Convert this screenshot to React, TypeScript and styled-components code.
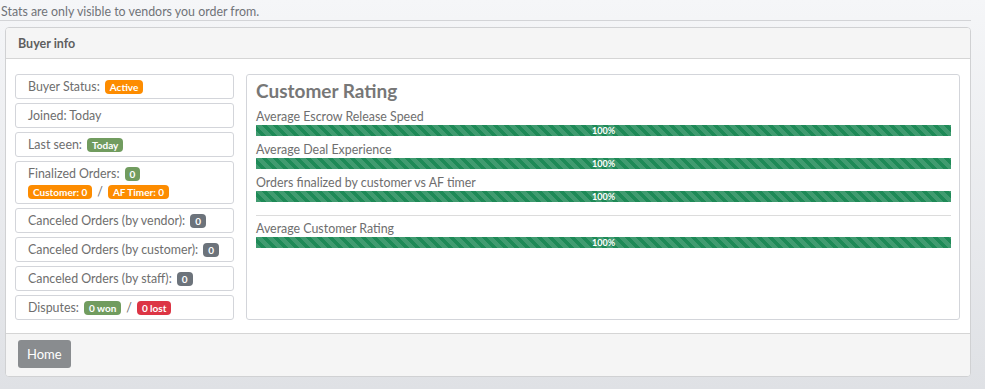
import React from "react";
import styled, { createGlobalStyle } from "styled-components";

const GlobalStyle = createGlobalStyle`
  html, body {
    margin: 0;
    padding: 0;
  }
  body {
    min-height: 389px;
    background: linear-gradient(#f5f6f8, #dfe1e5);
    font-family: "Lato", "Open Sans", sans-serif;
    color: #6e6e6e;
    font-size: 12.4px;
  }
`;

const Page = styled.div`
  width: 971px;
  padding-top: 4px;
`;

const Note = styled.div`
  padding-left: 1px;
  height: 15px;
  line-height: 15px;
  color: #707378;
`;

const Rule = styled.div`
  height: 1px;
  background: #d3d4d7;
  margin-top: 1px;
`;

const Panel = styled.div`
  margin: 6px 0 0 5px;
  border: 1px solid #d0d1d3;
  border-radius: 4px;
  background: #fff;
  overflow: hidden;
`;

const PanelHeader = styled.div`
  height: 30px;
  line-height: 31px;
  padding-left: 12px;
  background: #f5f5f5;
  border-bottom: 1px solid #d5d5d5;
  font-weight: 700;
  font-size: 12.5px;
  color: #5f5f5f;
`;

const PanelBody = styled.div`
  display: flex;
  gap: 12px;
  padding: 15px 10px 13px 9px;
`;

const List = styled.div`
  width: 219px;
  flex-shrink: 0;
  display: flex;
  flex-direction: column;
  gap: 4px;
`;

const Item = styled.div`
  border: 1px solid #d3d5da;
  border-radius: 3px;
  padding: 5px 12px 4px 12px;
  line-height: 14px;
  white-space: nowrap;
`;

const Line = styled.div`
  display: flex;
  align-items: center;
  height: 14px;
  gap: 5px;
`;

const SubRow = styled(Line)`
  margin-top: 4px;
`;

const Badge = styled.span<{ $tone: "orange" | "green" | "gray" | "red" }>`
  display: inline-block;
  padding: 0 5px;
  height: 14px;
  line-height: 14px;
  border-radius: 4px;
  font-size: 10px;
  font-weight: 700;
  color: #fff;
  background: ${(p) =>
    p.$tone === "orange"
      ? "#fd8c00"
      : p.$tone === "green"
      ? "#719c5f"
      : p.$tone === "red"
      ? "#dc3545"
      : "#6c737b"};
`;

const Card = styled.div`
  flex: 1;
  border: 1px solid #d3d5da;
  border-radius: 3px;
  padding: 4px 8px 10px 9px;
`;

const Title = styled.div`
  font-size: 19px;
  font-weight: 700;
  color: #777;
  line-height: 24px;
  margin-bottom: 7px;
`;

const Metric = styled.div`
  margin-bottom: 7px;
`;

const MetricLabel = styled.div`
  line-height: 14px;
  margin-bottom: 1px;
`;

const Bar = styled.div`
  height: 11px;
  background-color: #1e8a57;
  background-image: linear-gradient(
    45deg,
    rgba(255, 255, 255, 0.15) 25%,
    transparent 25%,
    transparent 50%,
    rgba(255, 255, 255, 0.15) 50%,
    rgba(255, 255, 255, 0.15) 75%,
    transparent 75%,
    transparent
  );
  background-size: 11px 11px;
  color: #fff;
  font-size: 9px;
  font-weight: 700;
  line-height: 11px;
  text-align: center;
`;

const Divider = styled.div`
  height: 1px;
  background: #dcdcdc;
  margin: 13px 0 6px;
`;

const Footer = styled.div`
  background: #f5f5f5;
  border-top: 1px solid #d5d5d5;
  padding: 6px 12px 8px;
`;

const Button = styled.button`
  background: #898c8f;
  border: none;
  border-radius: 3px;
  color: #fff;
  font-family: inherit;
  font-size: 13px;
  height: 28px;
  padding: 0 9px;
`;

const metrics = [
  "Average Escrow Release Speed",
  "Average Deal Experience",
  "Orders finalized by customer vs AF timer",
];

export default function App() {
  return (
    <>
      <GlobalStyle />
      <Page>
        <Note>Stats are only visible to vendors you order from.</Note>
        <Rule />
        <Panel>
          <PanelHeader>Buyer info</PanelHeader>
          <PanelBody>
            <List>
              <Item>
                <Line>
                  Buyer Status: <Badge $tone="orange">Active</Badge>
                </Line>
              </Item>
              <Item>
                <Line>Joined: Today</Line>
              </Item>
              <Item>
                <Line>
                  Last seen: <Badge $tone="green">Today</Badge>
                </Line>
              </Item>
              <Item>
                <Line>
                  Finalized Orders: <Badge $tone="green">0</Badge>
                </Line>
                <SubRow>
                  <Badge $tone="orange">Customer: 0</Badge>/
                  <Badge $tone="orange">AF Timer: 0</Badge>
                </SubRow>
              </Item>
              <Item>
                <Line>
                  Canceled Orders (by vendor): <Badge $tone="gray">0</Badge>
                </Line>
              </Item>
              <Item>
                <Line>
                  Canceled Orders (by customer): <Badge $tone="gray">0</Badge>
                </Line>
              </Item>
              <Item>
                <Line>
                  Canceled Orders (by staff): <Badge $tone="gray">0</Badge>
                </Line>
              </Item>
              <Item>
                <Line>
                  Disputes: <Badge $tone="green">0 won</Badge> /
                  <Badge $tone="red">0 lost</Badge>
                </Line>
              </Item>
            </List>
            <Card>
              <Title>Customer Rating</Title>
              {metrics.map((m) => (
                <Metric key={m}>
                  <MetricLabel>{m}</MetricLabel>
                  <Bar>100%</Bar>
                </Metric>
              ))}
              <Divider />
              <Metric>
                <MetricLabel>Average Customer Rating</MetricLabel>
                <Bar>100%</Bar>
              </Metric>
            </Card>
          </PanelBody>
          <Footer>
            <Button>Home</Button>
          </Footer>
        </Panel>
      </Page>
    </>
  );
}
